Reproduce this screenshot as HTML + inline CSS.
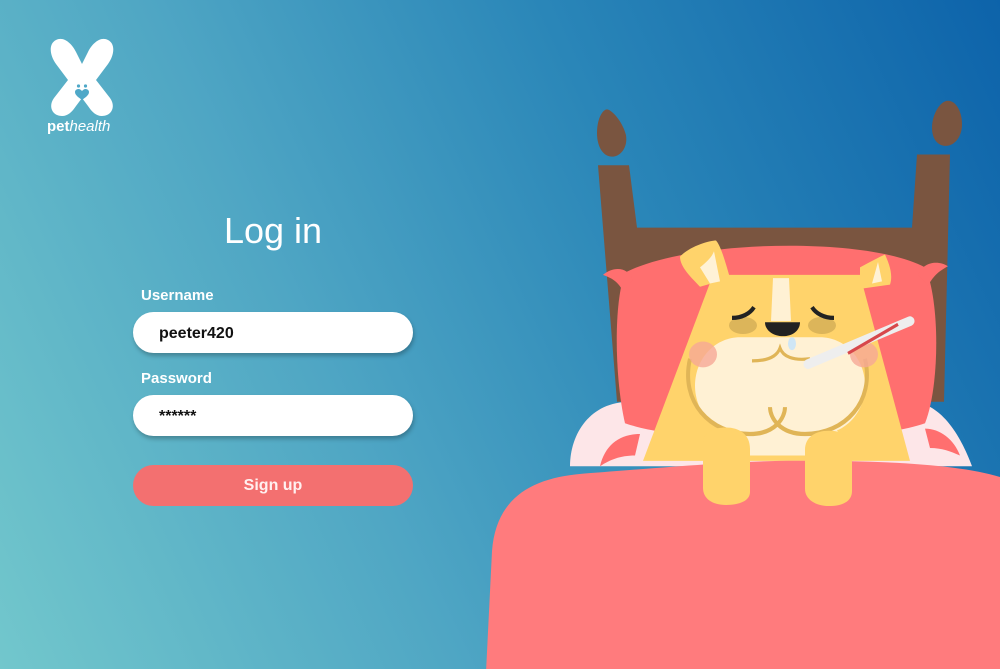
<!DOCTYPE html>
<html><head><meta charset="utf-8"><style>
*{margin:0;padding:0;box-sizing:border-box}
body{width:1000px;height:669px;overflow:hidden;position:relative;font-family:"Liberation Sans",sans-serif;
background:linear-gradient(65deg,#72c7cc 0%,#4fa6c4 35%,#2a86b8 65%,#0d63aa 100%);}
.t{position:absolute;color:#fff}
.inp{position:absolute;left:133px;width:280px;height:41px;border-radius:21px;background:#fff;box-shadow:1px 3px 4px rgba(0,0,0,.25);font-weight:bold;font-size:16px;color:#111;padding-left:26px;line-height:43px}
.lbl{position:absolute;left:141px;color:#fff;font-weight:bold;font-size:15px}
</style></head><body>
<svg style="position:absolute;left:50px;top:38px" width="64" height="80" viewBox="0 0 64 80">
<path fill="#fff" d="M6 2c-8 4-6 16 0 24l12 16-14 18c-6 8-2 18 8 18 6 0 10-4 14-10l6-8 6 8c4 6 8 10 14 10 10 0 14-10 8-18L46 42l12-16c6-8 8-20 0-24-8-4-16 4-20 12l-6 12-6-12C22 6 14-2 6 2z"/>
<circle cx="28.5" cy="48" r="1.6" fill="#4fa8c8"/><circle cx="35.5" cy="48" r="1.6" fill="#4fa8c8"/>
<path fill="#4fa8c8" d="M32 62c-4-3-7-5-7-8 0-2 2-3 3.5-3s2.5 1 3.5 2c1-1 2-2 3.5-2s3.5 1 3.5 3c0 3-3 5-7 8z"/>
</svg>
<div class="t" style="left:47px;top:118px;font-size:15px;"><b>pet</b><i>health</i></div>
<div class="t" style="left:0;width:546px;text-align:center;top:210px;font-size:36px">Log in</div>
<div class="lbl" style="top:287px">Username</div>
<div class="inp" style="top:312px">peeter420</div>
<div class="lbl" style="top:370px">Password</div>
<div class="inp" style="top:395px">******</div>
<div style="position:absolute;left:133px;top:465px;width:280px;height:41px;border-radius:21px;background:#f37070;color:#fff0f0;font-weight:bold;font-size:16px;text-align:center;line-height:42px">Sign up</div>
<svg style="position:absolute;left:0;top:0" width="1000" height="669" viewBox="0 0 1000 669">
<g transform="translate(0,90) scale(1,1.075) translate(0,-90)">
<g fill="#7a5540">
<path d="M597 130c0-14 6-22 10-22s15 10 19 24c2 12-6 20-14 20s-15-8-15-22z"/>
<path d="M932 125c0-12 8-25 16-25s14 10 14 22c0 12-8 20-16 20s-14-6-14-17z"/>
<path d="M598 160h31l8 58h275l5-68h33l-6 230h-327z"/>
</g>
<path fill="#fde6e8" d="M570 440c0-30 20-60 60-60h280c30 0 50 30 62 60z"/>
<path fill="#ff6f6f" d="M625 260c60-30 240-35 300-5 15 30 15 110 0 145-60 20-240 20-300 0-10-40-12-110 0-140z"/>
<path fill="#ff6f6f" d="M603 262c10-8 25-8 30 5l-10 10c-6-10-12-12-20-15zM948 254c-10-6-25-4-30 8l10 10c6-10 12-14 20-18zM600 440c5-20 20-30 40-30l-5 20c-15 0-25 4-35 10zM960 430c-6-15-20-25-35-25l5 18c12 0 20 3 30 7z"/>
<path fill="#ffd36b" d="M713 262l-70 173h267l-50-173z"/>
<path fill="#ffd36b" d="M680 245c10-10 30-15 36-15 5 5 10 22 14 35l-30 8c-8-8-20-18-20-28zM860 255c10-5 20-10 25-12 5 10 8 20 5 28l-30 4z"/>
<path fill="#fff2d6" d="M700 255c8-6 12-10 14-15l6 28-10 2zM878 250l4 18-10 2z"/>
<path fill="#fff1d4" d="M773 265h16l2 40h-20z"/>
<path fill="#fff1d4" d="M695 365c0-25 20-45 45-45h80c25 0 45 20 45 45 0 25-20 45-45 45h-80c-25 0-45-20-45-45z"/>
<path fill="#fff1d4" d="M715 410l25-30h70l30 30-10 20h-110z"/>
<path fill="none" stroke="#e0b557" stroke-width="4" d="M690 340c-10 40 20 70 60 70 25 0 35-15 35-25M865 340c10 40-20 70-60 70-25 0-35-15-35-25"/>
<path fill="none" stroke="#e0b557" stroke-width="3" d="M752 342c15 0 25-4 28-12 3 8 13 12 30 10"/>
<ellipse cx="743" cy="309" rx="14" ry="8" fill="#dcb55a"/>
<ellipse cx="822" cy="309" rx="14" ry="8" fill="#dcb55a"/>
<ellipse cx="703" cy="336" rx="14" ry="12" fill="#f6a996" opacity=".8"/>
<ellipse cx="864" cy="336" rx="14" ry="12" fill="#f6a996" opacity=".8"/>
<path fill="none" stroke="#222" stroke-width="4" d="M732 302c10 0 18-4 22-10M834 302c-10 0-18-4-22-10"/>
<path fill="#222" d="M765 306h35c0 8-8 13-17 13s-18-5-18-13z"/>
<ellipse cx="792" cy="326" rx="4" ry="6" fill="#cfe6f5"/>
<path stroke="#eee" stroke-width="9" stroke-linecap="round" d="M808 345L910 305"/>
<path stroke="#d7484b" stroke-width="3" d="M848 335L898 308"/>
<path fill="#ff7b7d" d="M484 669l8-150c4-50 40-68 90-72 110-8 170-13 230-12 80 0 150 4 188 15v219z"/>
<path fill="#ffd36b" d="M703 420c0-12 10-16 23-16s24 6 24 20v40c0 8-10 12-24 12s-23-6-23-16zM805 425c0-12 10-18 24-18s23 6 23 18v38c0 10-10 14-23 14s-24-6-24-16z"/>
</g>
</svg>
</body></html>
